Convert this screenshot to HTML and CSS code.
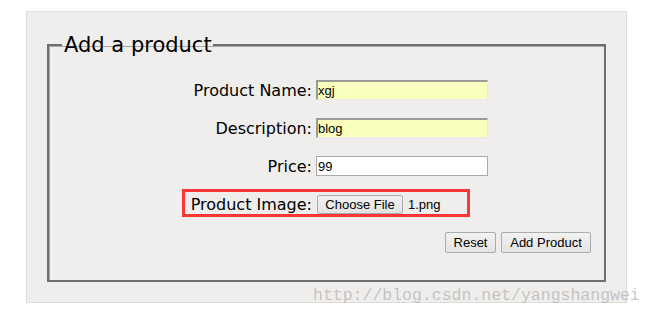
FILE: index.html
```html
<!DOCTYPE html>
<html>
<head>
    <meta charset="UTF-8">
    <title>Add a product</title>
    <link rel="stylesheet" href="styles.css">
</head>
<body>
    <div class="panel">
        <fieldset class="product-form">
            <legend>Add a product</legend>

            <div class="form-row">
                <label for="name">Product Name:</label>
                <input type="text" id="name" class="filled" value="xgj">
            </div>

            <div class="form-row">
                <label for="description">Description:</label>
                <input type="text" id="description" class="filled" value="blog">
            </div>

            <div class="form-row">
                <label for="price">Price:</label>
                <input type="text" id="price" value="99">
            </div>

            <div class="form-row file-row">
                <span class="highlight"></span>
                <label for="image">Product Image:</label>
                <div class="file-picker">
                    <button type="button" id="image">Choose File</button>
                    <span class="file-name">1.png</span>
                </div>
            </div>

            <div class="button-group">
                <button type="reset">Reset</button>
                <button type="submit">Add Product</button>
            </div>
        </fieldset>
    </div>

    <div class="watermark">http://blog.csdn.net/yangshangwei</div>
</body>
</html>
```

FILE: styles.css
```css
body {
    margin: 0;
    padding: 11px 28px 11px 26px;
    background-color: #fff;
    font-family: "DejaVu Sans", Verdana, sans-serif;
    color: #000;
    position: relative;
    min-height: 314px;
    box-sizing: border-box;
}

.panel {
    background-color: #efeeec;
    border: 1px solid #dcdcd8;
    padding: 21px 20px 21px 20px;
    height: 292px;
    box-sizing: border-box;
}

.product-form {
    margin: 0;
    padding: 0 13px 0 13px;
    border: 2px solid #6e6e6e;
    box-shadow: inset 1px 1px 0 #a8a8a8;
    height: 249px;
    box-sizing: border-box;
}

.product-form legend {
    font-size: 21px;
    padding: 0 1px 0 2px;
    line-height: 24px;
}

.form-row {
    display: grid;
    grid-template-columns: 250px 1fr;
    column-gap: 4px;
    align-items: center;
    height: 20px;
    margin-top: 18px;
    position: relative;
}

.form-row:first-of-type {
    margin-top: 23px;
}

.form-row label {
    font-size: 16px;
    text-align: right;
}

.form-row input[type="text"] {
    width: 172px;
    height: 20px;
    box-sizing: border-box;
    margin: 0;
    padding: 0 1px;
    font-family: "Liberation Sans", Arial, sans-serif;
    font-size: 13px;
    background-color: #fff;
    border: 1px solid #a9a9a9;
    outline: none;
}

.form-row input.filled {
    background-color: #faffbd;
    border-top: 2px solid #9a9a98;
    border-left: 2px solid #9a9a98;
    border-right: 1px solid #eceae6;
    border-bottom: 1px solid #eceae6;
    padding-left: 0;
}

.file-picker {
    display: flex;
    align-items: center;
    gap: 5px;
}

button {
    font-family: "Liberation Sans", Arial, sans-serif;
    font-size: 13px;
    color: #000;
    height: 20px;
    padding: 0 7px;
    border: 1px solid #acacac;
    border-radius: 2px;
    background: linear-gradient(#f2f2f2, #e3e3e3);
    margin: 0;
}

#image {
    width: 86px;
    height: 19px;
    margin-left: 1px;
}

.file-name {
    font-family: "Liberation Sans", Arial, sans-serif;
    font-size: 13px;
}

.highlight {
    position: absolute;
    left: 120px;
    top: -5px;
    width: 288px;
    height: 28px;
    border: 3px solid #ff3636;
    box-sizing: border-box;
}

.button-group {
    display: flex;
    justify-content: flex-end;
    gap: 5px;
    margin-top: 18px;
}

.button-group button {
    height: 21px;
}

.button-group button[type="reset"] {
    width: 51px;
}

.button-group button[type="submit"] {
    width: 90px;
}

.watermark {
    position: absolute;
    left: 313px;
    top: 286px;
    font-family: "Liberation Mono", "Courier New", monospace;
    font-size: 16.5px;
    color: rgba(165, 165, 165, 0.6);
    white-space: nowrap;
}
```
